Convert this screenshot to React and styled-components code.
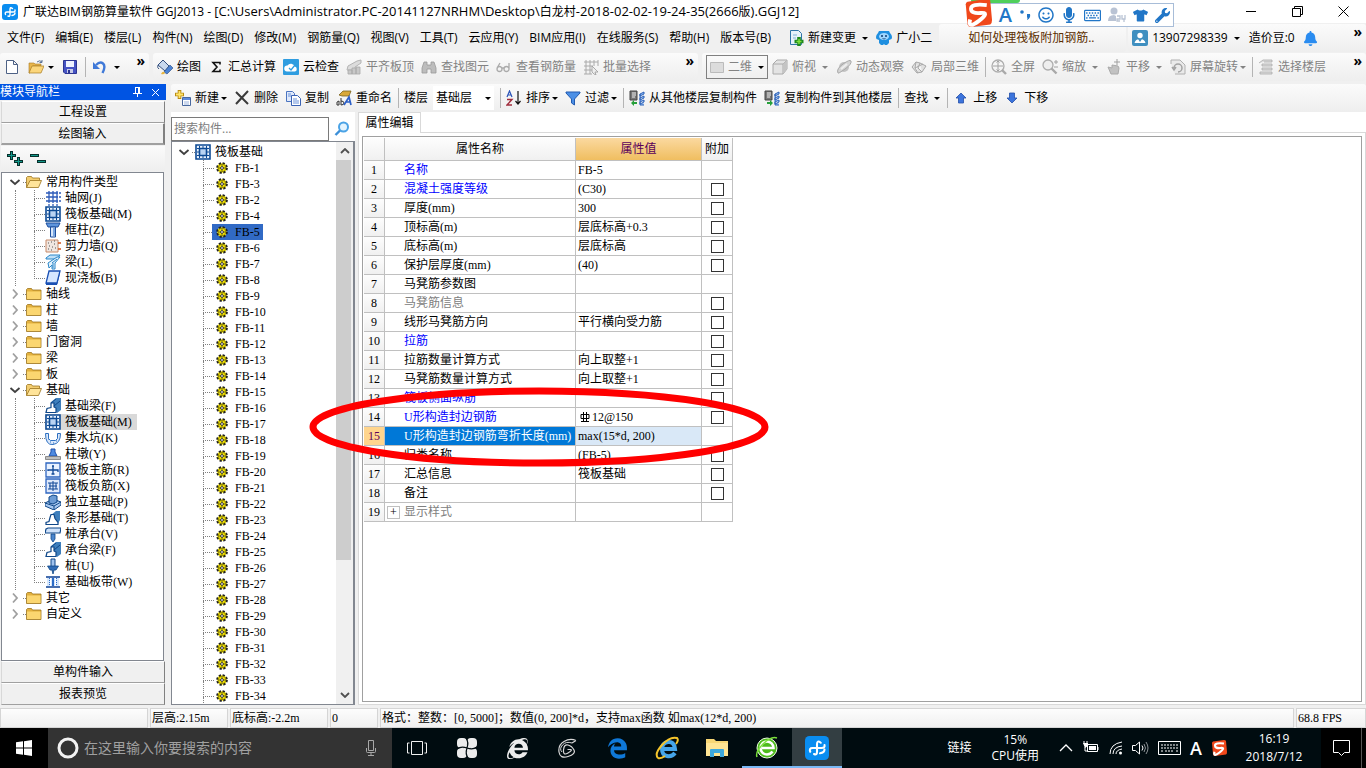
import React, { useState } from 'react';
import styled, { createGlobalStyle, css } from 'styled-components';
import {
  FaBell,
  FaInternetExplorer,
  FaMicrophone,
  FaRegKeyboard,
  FaRegSmile,
  FaTshirt,
  FaWrench,
} from 'react-icons/fa';
import { FaEdgeLegacy } from 'react-icons/fa6';

const font = {
  ui: `'Open Sans', 'Noto Sans CJK SC', sans-serif`,
  song: `'Liberation Serif', 'Noto Sans CJK SC', serif`,
};

const color = {
  face: '#f0f0f0',
  line: '#c0c0c0',
  frame: '#828790',
  disabled: '#838383',
  blue: '#0000ff',
  title: '#0054e3',
  select: '#316ac5',
  accent: '#0078d7',
};

// data
const menus = [
  '文件(F)', '编辑(E)', '楼层(L)', '构件(N)', '绘图(D)', '修改(M)', '钢筋量(Q)',
  '视图(V)', '工具(T)', '云应用(Y)', 'BIM应用(I)', '在线服务(S)', '帮助(H)', '版本号(B)',
];

const drawTools = [
  { icon: 'paint', label: '绘图' },
  { icon: 'sigma', label: '汇总计算' },
  { icon: 'cloud', label: '云检查' },
  { icon: 'align', label: '平齐板顶', disabled: true },
  { icon: 'binoculars', label: '查找图元', disabled: true },
  { icon: 'glasses', label: '查看钢筋量', disabled: true },
  { icon: 'batch', label: '批量选择', disabled: true },
];

const viewTools = [
  { icon: 'cube', label: '俯视', arrow: 'wide' },
  { icon: 'orbit', label: '动态观察' },
  { icon: 'local3d', label: '局部三维', divider: true },
  { icon: 'fit', label: '全屏' },
  { icon: 'zoom', label: '缩放', arrow: 'wide' },
  { icon: 'pan', label: '平移', arrow: 'wide' },
  { icon: 'rotate', label: '屏幕旋转', arrow: 'tight', divider: true },
  { icon: 'floors', label: '选择楼层' },
];

const moduleTree = [
  {
    label: '常用构件类型',
    children: [
      ['grid', '轴网(J)'],
      ['raft', '筏板基础(M)'],
      ['column', '框柱(Z)'],
      ['wall', '剪力墙(Q)'],
      ['beam', '梁(L)'],
      ['slab', '现浇板(B)'],
    ],
  },
  { label: '轴线' },
  { label: '柱' },
  { label: '墙' },
  { label: '门窗洞' },
  { label: '梁' },
  { label: '板' },
  {
    label: '基础',
    children: [
      ['footBeam', '基础梁(F)'],
      ['raft', '筏板基础(M)', true],
      ['pit', '集水坑(K)'],
      ['pier', '柱墩(Y)'],
      ['mainBar', '筏板主筋(R)'],
      ['negBar', '筏板负筋(X)'],
      ['isolated', '独立基础(P)'],
      ['strip', '条形基础(T)'],
      ['cap', '桩承台(V)'],
      ['footBeam', '承台梁(F)'],
      ['pile', '桩(U)'],
      ['band', '基础板带(W)'],
    ],
  },
  { label: '其它' },
  { label: '自定义' },
];

const components = [
  1, 3, 2, 4, 5, 6, 7, 8, 9, 10, 11, 12, 13, 14, 15, 16, 17, 18, 19, 20, 21, 22,
  23, 24, 25, 26, 27, 28, 29, 30, 31, 32, 33, 34,
].map((n) => `FB-${n}`);

const properties = [
  { name: '名称', value: 'FB-5', tone: 'blue', extra: false },
  { name: '混凝土强度等级', value: '(C30)', tone: 'blue' },
  { name: '厚度(mm)', value: '300' },
  { name: '顶标高(m)', value: '层底标高+0.3' },
  { name: '底标高(m)', value: '层底标高' },
  { name: '保护层厚度(mm)', value: '(40)' },
  { name: '马凳筋参数图', value: '', extra: false },
  { name: '马凳筋信息', value: '', tone: 'gray' },
  { name: '线形马凳筋方向', value: '平行横向受力筋' },
  { name: '拉筋', value: '', tone: 'blue' },
  { name: '拉筋数量计算方式', value: '向上取整+1' },
  { name: '马凳筋数量计算方式', value: '向上取整+1' },
  { name: '筏板侧面纵筋', value: '', tone: 'blue' },
  { name: 'U形构造封边钢筋', value: '12@150', tone: 'blue', rebar: true },
  { name: 'U形构造封边钢筋弯折长度(mm)', value: 'max(15*d, 200)', extra: false, active: true },
  { name: '归类名称', value: '(FB-5)' },
  { name: '汇总信息', value: '筏板基础' },
  { name: '备注', value: '' },
  { name: '显示样式', value: '', tone: 'gray', extra: false, expandable: true },
];

// icons, all drawn on a 16 x 16 grid
const glyphs = {
  app: (
    <>
      <rect width="16" height="16" rx="3" fill="#0a8df0" />
      <path
        d="M10.500 4.500Q8 2.500 8 5.500v5q0 2.500-2 1.500M3.500 10.500Q2.500 8 5 8h6q2.500 0 2-2M10 11.500q3-.5 3-2.500"
        fill="none"
        stroke="#fff"
        strokeWidth="1.400"
        strokeLinecap="round"
      />
    </>
  ),
  newDoc: <path d="M2.500 1.500h7l4 4v9h-11zM9.500 1.500v4h4" fill="#fff" stroke="#4d6185" />,
  open: (
    <>
      <path d="M1 4h5l1 1h6v2H5l-3 7H1z" fill="#e8b64c" stroke="#a87b22" strokeWidth=".6" />
      <path d="M4 7h12l-3 7H1z" fill="#fbd67c" stroke="#a87b22" strokeWidth=".7" />
      <path d="M9 3q3-2.500 5 0m0-2v2.500h-2.500" fill="none" stroke="#5b7396" />
    </>
  ),
  save: (
    <>
      <path d="M1.500 1.500h13v13H3l-1.500-1.500z" fill="#4553c4" stroke="#2c3591" />
      <path d="M4 2h8v6H4z" fill="#eef2ff" />
      <path d="M5 10h6v4H5z" fill="#c8cbe8" />
      <path d="M6 11h2v3H6z" fill="#2c3591" />
    </>
  ),
  undo: (
    <>
      <path d="M4 6q4-4 7-1.500T10.500 14" fill="none" stroke="#3f79d8" strokeWidth="2.400" />
      <path d="M1 3v7h7z" fill="#3f79d8" />
    </>
  ),
  paint: (
    <>
      <path d="M1 6l5-5 6 6-4 5z" fill="#c9d9ee" stroke="#35507f" />
      <path d="M1 6q-1 3 1 4" fill="none" stroke="#35507f" />
      <path d="M7 13l6-7 3 3-6 6z" fill="#4a82d4" stroke="#28497f" strokeWidth=".6" />
      <path d="M4 15q2-4 4-1-1 2-4 1" fill="#e9b63d" />
    </>
  ),
  sigma: <path d="M12 5.500V3.500H5L9 8l-4 4.500h7v-2" fill="none" stroke="#111" strokeWidth="1.600" />,
  cloud: (
    <>
      <rect width="16" height="16" rx="1" fill="#2f9de0" />
      <path d="M4 12.500a3 3 0 0 1 .5-6 4 4 0 0 1 7.200 1A2.600 2.600 0 0 1 12 12.500z" fill="#fff" />
      <path d="M6 9l2 2 4-5" fill="none" stroke="#2f9de0" strokeWidth="1.300" />
    </>
  ),
  align: (
    <>
      <path d="M1 11l1-4 9-5 4-1v3l-6 4v3z" fill="#dcdcdc" stroke="#b4b4b4" />
      <path d="M2 11h4v4H2zM6 9h4v6H6zM10 8h4v7h-4z" fill="#c8c8c8" stroke="#a8a8a8" strokeWidth=".8" />
    </>
  ),
  binoculars: <path d="M3 3h3v3h4V3h3l2 6v5h-5v-4H6v4H1V9z" fill="#bdbdbd" stroke="#9a9a9a" strokeWidth=".8" />,
  glasses: <path d="M6 10a2.500 2.500 0 1 1-5 0 2.500 2.500 0 0 1 5 0zm7 0a2.500 2.500 0 1 1-5 0 2.500 2.500 0 0 1 5 0zM1 9l3-5m9 6V4M6 9h2" fill="none" stroke="#ababab" strokeWidth="1.300" />,
  batch: (
    <>
      <path d="M1 3h14M1 7h9M1 11h8M1 15h8M3 1v14M7 1v14M11 1v6M15 1v6" stroke="#aaa" fill="none" />
      <path d="M9 7l6 6h-3l1 3-2-1-2-2z" fill="#eee" stroke="#999" strokeWidth=".8" />
    </>
  ),
  cube: (
    <>
      <path d="M1 5l4-4h10v9l-4 5H1z" fill="#e3e3e3" stroke="#aaa" />
      <path d="M1 5h10v10M11 5l4-4" fill="none" stroke="#aaa" />
      <path d="M11 5l4-4v9l-4 5z" fill="#c4c4c4" />
    </>
  ),
  orbit: (
    <>
      <circle cx="8" cy="8" r="5" fill="#c2c2c2" />
      <path d="M2 14Q0 10 7 5t8-3Q16 5 9 10t-7 4z" fill="#d4d4d4" stroke="#a8a8a8" />
      <path d="M5 10l6-5" stroke="#eee" strokeWidth="2" />
    </>
  ),
  local3d: <path d="M1 8l4-5 4 1 6 3-4 6-5 1zM5 3l-1 6 3 5M9 4l-2 5 4 4M4 9l8-4" fill="#e0e0e0" stroke="#a8a8a8" />,
  fit: (
    <>
      <circle cx="7" cy="7" r="6" fill="none" stroke="#adadad" strokeWidth="1.300" />
      <path d="M7 2v10M2 7h10M5.500 3.500L7 2l1.500 1.500M5.500 10.500L7 12l1.500-1.500" fill="none" stroke="#a2a2a2" />
      <path d="M11 11l4 4" stroke="#a9a9a9" strokeWidth="2.400" />
    </>
  ),
  zoom: (
    <>
      <circle cx="6" cy="6" r="5" fill="#eee" stroke="#adadad" strokeWidth="1.300" />
      <path d="M9.500 9.500l5 5" stroke="#a9a9a9" strokeWidth="2.400" />
      <path d="M12 3h4M14 1v4M12 8h4" stroke="#a2a2a2" />
    </>
  ),
  pan: (
    <>
      <path d="M2 8l4 1V6l6 1 1 2-1 6H5z" fill="#c2c2c2" stroke="#aaa" />
      <path d="M11 0v6M8 3h6" stroke="#a0a0a0" />
    </>
  ),
  rotate: (
    <>
      <path d="M1 5V1h9l5 5v9H5" fill="#eaeaea" stroke="#b0b0b0" />
      <path d="M4 9a4 4 0 1 1 4 4M2 8l2 3 2-3" fill="none" stroke="#a3a3a3" strokeWidth="1.500" />
    </>
  ),
  floors: <path d="M1 4l4-3h9v2H6M4 5h10v2H4zM4 9h10v2H4zM2 13h12v2H2z" fill="#ddd" stroke="#aaa" strokeWidth=".8" />,
  create: (
    <>
      <path d="M4.500 0v9M0 4.500h9" stroke="#b98b12" strokeWidth="3.600" />
      <path d="M4.500 1v7M1 4.500h7" stroke="#ffe46b" strokeWidth="1.800" />
      <path d="M7.500 7.500h8v8h-8z" fill="#fff" stroke="#48689f" />
      <path d="M8 8h7v2H8z" fill="#5d8ade" />
      <path d="M9 12h5M9 14h5" stroke="#9ab2dc" />
    </>
  ),
  remove: <path d="M2 2l12 12M14 1L2 14" stroke="#3a3a3a" strokeWidth="2" fill="none" />,
  copy: (
    <>
      <path d="M1.500 1.500h6l2 2v8h-8z" fill="#dfe9fb" stroke="#4b74c0" />
      <path d="M6.500 5.500h6l3 3v7h-9z" fill="#fff" stroke="#3a62b4" />
      <path d="M8 9h4M8 11h6M8 13h6M3 4h3M3 6h3" stroke="#6b92da" />
    </>
  ),
  rename: (
    <>
      <path d="M3 5l4-4h8l-2 5H6z" fill="#d8a83a" stroke="#7a6220" strokeWidth=".8" />
      <path d="M1 15q-1-4 2-4v4zM5 8v7q3 0 3-2t-3-2" fill="none" stroke="#333" />
      <path d="M8 15l5-8 2 8M10 12h4" fill="none" stroke="#2d60c8" strokeWidth="1.700" />
    </>
  ),
  sort: (
    <>
      <path d="M1 7l2.500-6L6 7M2 5h3" fill="none" stroke="#2b54b8" strokeWidth="1.200" />
      <path d="M1 9.500h5L1 15h5" fill="none" stroke="#a02c3c" strokeWidth="1.400" />
      <path d="M12 1v13M9.500 11l2.500 3 2.500-3" fill="none" stroke="#111" strokeWidth="1.200" />
    </>
  ),
  filter: <path d="M1 2h14v1L9.500 9v6L6.500 13V9L1 3z" fill="#4b8fe6" stroke="#235bb0" />,
  copyFrom: (
    <>
      <path d="M1 1h7v9H1z" fill="#777" stroke="#444" />
      <path d="M3 3h4M3 5h4M3 7h3" stroke="#eee" />
      <path d="M11 4l4-2v2l-4 2zM11 8l4-2v2l-4 2zM11 12l4-2v2l-4 2zM11 4v11h4" fill="#8fb8f0" stroke="#2d62b8" />
      <path d="M2 13l3-3v2h3v2H5v2z" fill="#26a03a" />
    </>
  ),
  copyTo: (
    <>
      <path d="M1 1h7v9H1z" fill="#777" stroke="#444" />
      <path d="M3 3h4M3 5h4M3 7h3" stroke="#eee" />
      <path d="M11 4l4-2v2l-4 2zM11 8l4-2v2l-4 2zM11 12l4-2v2l-4 2zM11 4v11h4" fill="#8fb8f0" stroke="#2d62b8" />
      <path d="M9 13l-3-3v2H3v2h3v2z" fill="#26a03a" />
    </>
  ),
  up: <path d="M8 3l5 5h-2.500v5h-5V8H3z" fill="#3c74dc" stroke="#234fa8" strokeWidth=".8" />,
  down: <path d="M8 13L3 8h2.500V3h5v5H13z" fill="#3c74dc" stroke="#234fa8" strokeWidth=".8" />,
  change: (
    <>
      <path d="M2.500.5h8l3 3v11h-11z" fill="#e6f2fb" stroke="#2f75a8" />
      <path d="M5 5h4M5 8h3" stroke="#7fb2d8" />
      <path d="M11 7v9M6.500 11.500h9" stroke="#1f8a1f" strokeWidth="3.600" />
      <path d="M11 9v5M8.500 11.500h5" stroke="#7fe03c" strokeWidth="1.500" />
    </>
  ),
  robot: (
    <>
      <path d="M3 1h10l1 2q3 3 1.500 6L13 10v3l-2 2H9l-1-1-1 1H5l-2-2v-3L.5 9Q-1 6 2 3z" fill="#1f8fe0" />
      <ellipse cx="8" cy="6.500" rx="5" ry="3.500" fill="#9fd6ff" />
      <circle cx="6" cy="6" r="1" fill="#0d3d72" />
      <circle cx="10" cy="6" r="1" fill="#0d3d72" />
      <path d="M6.500 8.500q1.500 1 3 0" fill="none" stroke="#0d3d72" strokeWidth=".8" />
    </>
  ),
  user: (
    <>
      <rect width="16" height="16" rx="2" fill="#3f8fc0" />
      <circle cx="8" cy="5.500" r="2.700" fill="#fff" />
      <path d="M2.500 13q1-4 5.500-4t5.500 4z" fill="#fff" />
      <path d="M6 9l2 3 2-3" fill="#3f8fc0" />
    </>
  ),
  folderOpen: (
    <>
      <path d="M.5 13.500v-10l1-1h4l1 1.500h7v2.500" fill="#f3cd70" stroke="#9c7520" strokeWidth=".8" />
      <path d="M4 6.500h11.500l-3 7H.5z" fill="#ffe49a" stroke="#9c7520" strokeWidth=".8" />
    </>
  ),
  folder: (
    <>
      <path d="M.5 13.500v-10l1-1h4l1 1.500h8.500v9.500z" fill="#e3b13f" stroke="#9c7520" strokeWidth=".8" />
      <path d="M1 5.500h13.500v7.500H1z" fill="#fbd670" />
    </>
  ),
  grid: <path d="M1 3h12M1 7h12M1 11h12M4 1v12M8 1v12M12 1v12M14 3h2M14 7h2M14 11h2M4 14v2M8 14v2M12 14v2" stroke="#2d5bb9" strokeWidth="1.300" fill="none" />,
  raft: (
    <>
      <path d="M1 1h14v14H1z" fill="#e8f1fc" stroke="#0d4a94" strokeWidth="1.600" />
      <path d="M4.500 4.500h7v7h-7z" fill="#b9d3f2" stroke="#0d4a94" strokeWidth="1.600" />
      <path d="M4.500 2v2M8 2v2M11.500 2v2M4.500 12v2M8 12v2M11.500 12v2M2 4.500h2M2 8h2M2 11.500h2M12 4.500h2M12 8h2M12 11.500h2" stroke="#0d4a94" />
    </>
  ),
  column: (
    <>
      <path d="M1 1h14l-2 4H3z" fill="#5e95dc" stroke="#1d4f9e" />
      <path d="M5.500 5h5v10h-5z" fill="#d9e8fb" stroke="#1d4f9e" />
      <path d="M9 6v8" stroke="#7ba7e0" strokeWidth="2" />
    </>
  ),
  wall: (
    <>
      <path d="M1 2h12v12H1z" fill="#f0e6e0" stroke="#c78a68" />
      <path d="M3 5h1M6 4h1M9 6h1M4 8h1M7 9h1M10 10h1M3 11h1M6 12h1M9 3h1" stroke="#555" />
      <path d="M13 5h3M13 11h3" stroke="#d2551e" strokeWidth="1.500" />
    </>
  ),
  beam: (
    <>
      <path d="M1 4l4-3h10l-3 4H1z" fill="#bfe0f8" stroke="#2a86c8" />
      <path d="M3 9l9-6h3l-5 6v6H7v-4l-3 3z" fill="#e3f2fd" stroke="#2a86c8" />
      <path d="M7 9l5-4M8 14V9" stroke="#2a86c8" />
    </>
  ),
  slab: (
    <>
      <path d="M4 1h11l-3 12H1z" fill="#d5e6ff" stroke="#1a50b4" strokeWidth="1.300" />
      <path d="M1 13h11l3-12v2l-3 12H1z" fill="#1a50b4" />
    </>
  ),
  footBeam: (
    <>
      <path d="M6 4l5-4h5v12l-4 3z" fill="#3f7fbc" />
      <path d="M1 14.500l1-4 4-1V5h3v4l2 1v4.500z" fill="#fff" stroke="#0f4788" strokeWidth="1.200" />
      <path d="M6 5l5-4M9 8l6-5" stroke="#0f4788" />
    </>
  ),
  pit: (
    <>
      <path d="M.5 3.500h3v5l2 2h5l2-2v-5h3q0 10-7.500 11T.5 3.500z" fill="#dbe9fb" stroke="#2d6fc1" />
      <path d="M5 12h1M8 13h1M11 11h1M3 9h1" stroke="#2d6fc1" />
    </>
  ),
  pier: (
    <>
      <path d="M6 3h4v3l2 4H4l2-4z" fill="#4e8ae0" stroke="#1f4fa8" />
      <path d="M.5 10.500h15v3H.5z" fill="#bfbfbf" stroke="#777" strokeWidth=".8" />
    </>
  ),
  mainBar: (
    <>
      <path d="M1 1h14v14H1z" fill="#e8f1ff" stroke="#2e66c0" strokeWidth="1.300" />
      <path d="M7 4h2M8 4v8M6.500 12h3M3 9V8h10v2" fill="none" stroke="#0e4796" strokeWidth="1.300" />
    </>
  ),
  negBar: (
    <>
      <path d="M1 1h14v14H1z" fill="#dfe9fb" stroke="#2e66c0" strokeWidth="1.300" />
      <path d="M8 3v10M3 5h10M4 8h8M3 11h10M5 5v6M11 5v6" fill="none" stroke="#0e4796" />
    </>
  ),
  isolated: (
    <>
      <path d="M0 9l8-4 8 3v3l-7 5-9-4z" fill="#a9c9f0" stroke="#0f4788" />
      <path d="M4 3l4-2 4 1v6l-4 2-4-1z" fill="#6d9cd4" stroke="#0f4788" />
      <path d="M0 9l9 3 7-4M9 12v4" fill="none" stroke="#0f4788" />
    </>
  ),
  strip: (
    <>
      <path d="M6 5l5-4h4v9l-3 5z" fill="#3f7fbc" />
      <path d="M1 14.500v-2l3-1 1-4 1-3h3l1 4 3 4v2z" fill="#fff" stroke="#0f4788" strokeWidth="1.200" />
    </>
  ),
  cap: (
    <>
      <path d="M1 3l2-1h13l-1 5H0z" fill="#cfe2fa" stroke="#0f4788" strokeWidth="1.200" />
      <path d="M6 8h4v5l-2 3-2-3z" fill="#4b86ce" stroke="#0f4788" strokeWidth=".8" />
    </>
  ),
  pile: (
    <>
      <path d="M6 1h4v8H6z" fill="#9fc2ee" stroke="#0f4788" />
      <path d="M2.500 8h11L11 12H9l-1 4-1-4H5z" fill="#2f6cb6" stroke="#0f4788" strokeWidth=".8" />
    </>
  ),
  band: (
    <>
      <path d="M1 3h14M1 13h14" stroke="#0b3f94" strokeWidth="1.500" />
      <path d="M2 4h3v8H2zM6 4h4v8H6zM11 4h3v8h-3z" fill="#d6e7fc" />
      <path d="M4.500 4v8M11.500 4v8" stroke="#2b6cc8" strokeDasharray="1 1" />
      <path d="M8 4v8" stroke="#2b6cc8" strokeWidth="2" />
    </>
  ),
  gear: (
    <>
      <circle cx="8" cy="8" r="5.500" fill="#ffee00" />
      <circle cx="8" cy="8" r="5.600" fill="none" stroke="#222" strokeWidth="2.200" strokeDasharray="2.600 1.800" />
      <circle cx="8" cy="8" r="4.200" fill="none" stroke="#6d6500" strokeWidth=".6" />
      <path d="M8 4v8M4 8h8" stroke="#222" strokeWidth=".8" />
      <circle cx="8" cy="8" r="1.600" fill="#fff" stroke="#222" />
    </>
  ),
  search: (
    <>
      <circle cx="9.500" cy="6" r="4.500" fill="#e3f4ff" stroke="#4aa3e6" strokeWidth="2" />
      <path d="M6 9.500L1.500 14" stroke="#3c8fd8" strokeWidth="2.400" />
    </>
  ),
  expandAll: (
    <>
      <path d="M4.500 0v9M0 4.500h9M11.500 6v9M7 10.500h9" stroke="#062f2b" strokeWidth="3" />
      <path d="M4.500 1v7M1 4.500h7M11.500 7v7M8 10.500h7" stroke="#12988a" />
    </>
  ),
  collapseAll: (
    <>
      <path d="M0 4.500h9M7 10.500h9" stroke="#062f2b" strokeWidth="3" />
      <path d="M1 4.500h7M8 10.500h7" stroke="#12988a" />
    </>
  ),
  sogou: (
    <>
      <path d="M1 3q0-1 1-1.500L13 0q1.500 0 2 1l1 11q0 2-1 2.500L4 16q-1.500 0-2-1.500z" fill="#f0481b" />
      <path d="M13 3.500Q4 2.500 4 5.500T9.500 8t-1 4.500-5-.8" fill="none" stroke="#fff" strokeWidth="2.200" />
    </>
  ),
};

const Icon = ({ name, size = 16 }) => (
  <Svg width={size} height={size} viewBox="0 0 16 16" aria-hidden="true">
    {glyphs[name]}
  </Svg>
);

const Chevron = ({ open }) => (
  <Svg width="12" height="12" viewBox="0 0 12 12" aria-hidden="true">
    <path
      d={open ? 'M1.500 4L6 8l4.500-4' : 'M4 1.500L8 6l-4 4.500'}
      fill="none"
      stroke={open ? '#404040' : '#a0a0a0'}
      strokeWidth="1.800"
    />
  </Svg>
);

const Tool = ({ icon, label, disabled, arrow, divider }) => (
  <>
    <ToolButton type="button" disabled={disabled}>
      {icon && <Icon name={icon} />}
      {label}
      {arrow && <Arrow $wide={arrow === 'wide'} $tight={arrow === 'tight'} />}
    </ToolButton>
    {divider && <Divider />}
  </>
);

const ModuleNav = () => (
  <Nav>
    <NavTitle>
      模块导航栏
      <NavActions>
        <NavAction type="button" aria-label="固定">
          <Svg width="9" height="10" viewBox="0 0 9 10">
            <path d="M2 0.500h5M2.500 0v6M6.500 0v6M5.500 0v6M0 6.500h9M4.500 6v4" stroke="#fff" fill="none" />
          </Svg>
        </NavAction>
        <NavAction type="button" aria-label="关闭">
          <Svg width="9" height="9" viewBox="0 0 9 9">
            <path d="M1 1l7 7M8 1L1 8" stroke="#fff" />
          </Svg>
        </NavAction>
      </NavActions>
    </NavTitle>
    <NavTab type="button">工程设置</NavTab>
    <NavTab type="button" $active>绘图输入</NavTab>
    <NavTools>
      <IconButton type="button" aria-label="全部展开"><Icon name="expandAll" /></IconButton>
      <IconButton type="button" aria-label="全部折叠"><Icon name="collapseAll" /></IconButton>
    </NavTools>
    <NavTree>
      {moduleTree.map(({ label, children }) => (
        <li key={label}>
          <GroupRow>
            <Chevron open={!!children} />
            <Stub />
            <TreeLabel type="button">
              <Icon name={children ? 'folderOpen' : 'folder'} />
              {label}
            </TreeLabel>
          </GroupRow>
          {children && (
            <Branches $line>
              {children.map(([icon, text, selected], i) => (
                <TreeRow key={text}>
                  <Branch $last={i === children.length - 1} />
                  <TreeLabel type="button" $gray={selected}>
                    <Icon name={icon} />
                    {text}
                  </TreeLabel>
                </TreeRow>
              ))}
            </Branches>
          )}
        </li>
      ))}
    </NavTree>
    <NavTab type="button">单构件输入</NavTab>
    <NavTab type="button">报表预览</NavTab>
  </Nav>
);

const ComponentList = () => {
  const [selected, setSelected] = useState('FB-5');

  return (
    <ListPane>
      <SearchRow>
        <SearchInput type="text" placeholder="搜索构件..." aria-label="搜索构件" />
        <IconButton type="button" aria-label="搜索"><Icon name="search" /></IconButton>
      </SearchRow>
      <ListBox>
        <ListTree>
          <GroupRow>
            <Chevron open />
            <Stub />
            <TreeLabel type="button">
              <Icon name="raft" />
              筏板基础
            </TreeLabel>
          </GroupRow>
          <Branches>
            {components.map((name) => (
              <TreeRow key={name}>
                <Branch />
                <ComponentLabel
                  type="button"
                  $selected={name === selected}
                  onClick={() => setSelected(name)}
                >
                  <Icon name="gear" size={14} />
                  {name}
                </ComponentLabel>
              </TreeRow>
            ))}
          </Branches>
        </ListTree>
        <ScrollBar>
          <ScrollArrow>
            <Svg width="10" height="6" viewBox="0 0 10 6"><path d="M1 5l4-4 4 4" fill="none" stroke="#505050" strokeWidth="1.800" /></Svg>
          </ScrollArrow>
          <ScrollTrack><ScrollThumb /></ScrollTrack>
          <ScrollArrow>
            <Svg width="10" height="6" viewBox="0 0 10 6"><path d="M1 1l4 4 4-4" fill="none" stroke="#505050" strokeWidth="1.800" /></Svg>
          </ScrollArrow>
        </ScrollBar>
      </ListBox>
    </ListPane>
  );
};

const PropertyEditor = () => (
  <Editor>
    <Tabs>
      <Tab type="button">属性编辑</Tab>
      <TabLine />
    </Tabs>
    <Sheet>
      <SheetFrame>
        <TableHolder>
          <Table>
            <colgroup>
              <col width="21" />
              <col width="191" />
              <col width="126" />
              <col width="31" />
            </colgroup>
            <thead>
              <tr>
                <HeadCell />
                <HeadCell>属性名称</HeadCell>
                <HeadCell $current>属性值</HeadCell>
                <HeadCell>附加</HeadCell>
              </tr>
            </thead>
            <tbody>
              {properties.map(({ name, value, tone, extra = true, active, expandable, rebar }, i) => (
                <tr key={name}>
                  <NumberCell $active={active}>{i + 1}</NumberCell>
                  <NameCell $tone={tone} $active={active}>
                    <NameInner>
                      <ToggleSlot>
                        {expandable && <Toggle type="button" aria-label="展开">+</Toggle>}
                      </ToggleSlot>
                      {name}
                    </NameInner>
                  </NameCell>
                  <ValueCell $active={active}>
                    {rebar && (
                      <RebarMark width="10" height="10" viewBox="0 0 10 10" aria-label="三级钢">
                        <path d="M1 2.500v4h8v-4zM3.500 0v9M6.500 0v9M1 9.500h8" fill="none" stroke="#000" />
                      </RebarMark>
                    )}
                    {value}
                  </ValueCell>
                  <ExtraCell>
                    {extra && <Check type="checkbox" aria-label={`附加 ${name}`} />}
                  </ExtraCell>
                </tr>
              ))}
            </tbody>
          </Table>
          <Marker viewBox="0 0 460 80" aria-hidden="true">
            <ellipse cx="230" cy="40" rx="226" ry="36" />
          </Marker>
        </TableHolder>
      </SheetFrame>
    </Sheet>
  </Editor>
);

const InputMethod = () => (
  <>
    <SpeedBall />
    <Ime>
      <ImeLogo><Icon name="sogou" size={28} /></ImeLogo>
      <ImeLetter>A</ImeLetter>
      <Svg width="12" height="12" viewBox="0 0 12 12">
        <circle cx="3" cy="3" r="1.800" fill="#2176c7" />
        <path d="M8 5h3q1 4-3 6 1-2 0-3z" fill="#2176c7" />
      </Svg>
      <FaRegSmile size={16} />
      <FaMicrophone size={16} />
      <FaRegKeyboard size={17} />
      <Svg width="18" height="16" viewBox="0 0 18 16">
        <circle cx="6" cy="4" r="3.500" fill="#b9c3d4" />
        <path d="M0 14q0-6 6-6l2 1v5z" fill="#b9c3d4" />
        <path d="M9 9h3v3H9v2h3M14 8v4h3V8M16 12v3" fill="none" stroke="#b9c3d4" strokeWidth="1.300" />
      </Svg>
      <FaTshirt size={15} />
      <FaWrench size={15} />
    </Ime>
  </>
);

const TaskBar = () => (
  <Task>
    <Start type="button" aria-label="开始">
      <Svg width="16" height="16" viewBox="0 0 16 16">
        <path d="M0 2.300l7-1v6.200H0zM8 1.200L16 0v7.500H8zM0 8.500h7v6.200l-7-1zM8 8.500h8V16l-8-1.200z" fill="#fff" />
      </Svg>
    </Start>
    <Cortana>
      <Svg width="22" height="22" viewBox="0 0 22 22">
        <circle cx="11" cy="11" r="9" fill="none" stroke="#f2f2f2" strokeWidth="3" />
      </Svg>
      <CortanaInput type="text" placeholder="在这里输入你要搜索的内容" aria-label="搜索" />
      <Svg width="12" height="18" viewBox="0 0 12 18">
        <path d="M3.500 1.500h5v10h-5zM1.500 9v3.500q0 1 1 1h7q1 0 1-1V9M6 14v3M3 16.500h6" fill="none" stroke="#a8a8a8" />
      </Svg>
    </Cortana>
    <TaskApps>
      <TaskButton type="button" aria-label="任务视图">
        <Svg width="20" height="14" viewBox="0 0 20 14">
          <path d="M4.500.5h11v13h-11zM2.500 2H.5v10h2M17.500 2h2v10h-2" fill="none" stroke="#f0f0f0" />
        </Svg>
      </TaskButton>
      <TaskButton type="button" aria-label="四叶草">
        <Svg width="22" height="22" viewBox="0 0 22 22">
          <rect x="1" y="1" width="10" height="10" rx="4" fill="#ececec" />
          <rect x="11" y="1" width="10" height="10" rx="4" fill="#ececec" />
          <rect x="1" y="11" width="10" height="10" rx="4" fill="#ececec" />
          <rect x="11" y="11" width="10" height="10" rx="4" fill="#ececec" />
          <path d="M8 8h6v6H8z" fill="#ececec" />
          <path d="M11 11q2-6-1-10M11 11q6 2 10-1M11 11q-2 6 1 10M11 11q-6-2-10 1" fill="none" stroke="#000c10" strokeWidth="1.200" />
        </Svg>
      </TaskButton>
      <TaskButton type="button" aria-label="浏览器" $tone="#ececec"><FaInternetExplorer size={21} /></TaskButton>
      <TaskButton type="button" aria-label="漩涡">
        <Svg width="20" height="20" viewBox="0 0 20 20">
          <path d="M19 2.500Q13 0 7 3.500T2 14t9 4.500 6-6.500-6-5-4.500 5 4.500 3 2.500-3.500h-3M19 2.500l-4 2.500" fill="none" stroke="#d8d8d8" strokeWidth="1.200" />
          <path d="M15 5Q9 3 5.500 7T5 14" fill="none" stroke="#d8d8d8" />
        </Svg>
      </TaskButton>
      <TaskButton type="button" aria-label="Edge" $tone="#0f78d8"><FaEdgeLegacy size={21} /></TaskButton>
      <TaskButton type="button" aria-label="Internet Explorer" $tone="#4ab2f0">
        <Svg width="24" height="24" viewBox="0 0 24 24">
          <path d="M20 17Q17 21 12 20t-5-7 6-7 7 7H8" fill="none" stroke="#45a5ea" strokeWidth="4" />
          <path d="M3 22Q-1 18 7 9T22 2q2 2-1 6M3 22q3 1 7-2" fill="none" stroke="#f5c52c" strokeWidth="2" />
        </Svg>
      </TaskButton>
      <TaskButton type="button" aria-label="文件资源管理器">
        <Svg width="22" height="20" viewBox="0 0 22 20">
          <path d="M0 1h8l2 2h12v15H0z" fill="#f8d775" />
          <path d="M0 5h22v13H0z" fill="#ffe594" />
          <path d="M4 19v-7q0-1 1-1h12q1 0 1 1v7h-4v-4H8v4z" fill="#3ea8dc" />
        </Svg>
      </TaskButton>
      <TaskButton type="button" aria-label="360浏览器" $running>
        <Svg width="24" height="24" viewBox="0 0 24 24">
          <circle cx="12" cy="12" r="10" fill="#4dbb1c" stroke="#e9f8df" />
          <path d="M17.500 15.500q-2 3-5.500 3a6.500 6.500 0 1 1 6.500-6.500H7" fill="none" stroke="#fff" strokeWidth="2.600" />
          <path d="M2 21Q0 16 8 8t14-6" fill="none" stroke="#7be03c" strokeWidth="1.500" />
        </Svg>
      </TaskButton>
      <TaskButton type="button" aria-label="广联达" $running $focus><Icon name="app" size={24} /></TaskButton>
    </TaskApps>
    <Tray>
      <span>链接</span>
      <TrayStack>
        <span>15%</span>
        <span>CPU使用</span>
      </TrayStack>
      <TrayIcons>
        <Svg width="14" height="10" viewBox="0 0 14 10"><path d="M1 8l6-6 6 6" fill="none" stroke="#fff" strokeWidth="1.300" /></Svg>
        <Svg width="18" height="14" viewBox="0 0 18 14">
          <path d="M5.500 3.500h10v7h-10zM16 6v3" fill="none" stroke="#fff" />
          <path d="M7 5h7v4H7zM1 2h5v3L3 7z" fill="#fff" />
          <path d="M2 0v3M5 0v3M3 6v4h3" stroke="#fff" fill="none" />
        </Svg>
        <Svg width="14" height="14" viewBox="0 0 14 14">
          <path d="M1 13Q1 3 13 1M4 13q0-7 9-8M7 13q0-4 6-5" fill="none" stroke="#fff" />
          <circle cx="11.500" cy="12" r="1.500" fill="#fff" />
        </Svg>
        <Svg width="17" height="14" viewBox="0 0 17 14">
          <path d="M.5 4.500h3l4-3.500v12l-4-3.500h-3zM10 4.500q2 2.500 0 5" fill="none" stroke="#fff" />
          <path d="M12 3q3 4 0 8M14 1q4 6 0 12" fill="none" stroke="#8b9194" />
        </Svg>
        <Svg width="23" height="14" viewBox="0 0 23 14">
          <path d="M.5.500h22v13H.5z" fill="none" stroke="#fff" />
          <path d="M3 4h17M3 7h17M3 10h2M7 10h9M18 10h2" stroke="#fff" strokeDasharray="2 1" />
        </Svg>
        <TrayLetter>A</TrayLetter>
        <Icon name="sogou" />
      </TrayIcons>
    </Tray>
    <Clock>
      <span>16:19</span>
      <span>2018/7/12</span>
    </Clock>
    <Notice type="button" aria-label="通知">
      <Svg width="17" height="17" viewBox="0 0 17 17">
        <path d="M.5.500h16v12h-5l-3 3-3-3h-5z" fill="none" stroke="#fff" />
      </Svg>
    </Notice>
    <ShowDesktop type="button" aria-label="显示桌面" />
  </Task>
);

const App = () => (
  <>
    <GlobalStyle />
    <Window>
      <TitleBar>
        <Icon name="app" />
        <TitleText>
          广联达BIM钢筋算量软件 GGJ2013 - <FilePath>[C:\Users\Administrator.PC-20141127NRHM\Desktop\</FilePath>
          白龙村<FilePath>-2018-02-02-19-24-35(2666</FilePath>版<FilePath>).GGJ12]</FilePath>
        </TitleText>
        <WindowButton type="button" aria-label="最小化">
          <Svg width="11" height="11" viewBox="0 0 11 11"><path d="M0 5.500h10" stroke="#000" /></Svg>
        </WindowButton>
        <WindowButton type="button" aria-label="还原">
          <Svg width="11" height="11" viewBox="0 0 11 11"><path d="M.5 2.500h8v8h-8zM2.500 2.500v-2h8v8h-2" fill="none" stroke="#000" /></Svg>
        </WindowButton>
        <WindowButton type="button" aria-label="关闭">
          <Svg width="11" height="11" viewBox="0 0 11 11"><path d="M.5.500l10 10M10.500.500l-10 10" stroke="#000" /></Svg>
        </WindowButton>
      </TitleBar>
      <InputMethod />

      <MenuBar>
        {menus.map((menu) => (
          <MenuItem type="button" key={menu}>{menu}</MenuItem>
        ))}
        <MenuExtras>
          <Tool icon="change" label="新建变更" arrow="wide" />
          <Tool icon="robot" label="广小二" />
        </MenuExtras>
        <Question href="#question">如何处理筏板附加钢筋..</Question>
        <Account>
          <Tool icon="user" label="13907298339" arrow="wide" />
          <span>造价豆:0</span>
          <FaBell size={15} color="#2a8cf0" />
          <Overflow>»</Overflow>
        </Account>
      </MenuBar>

      <ToolRow>
        <FileBar>
          <IconButton type="button" aria-label="新建"><Icon name="newDoc" /></IconButton>
          <ToolButton type="button" aria-label="打开"><Icon name="open" /><Arrow /></ToolButton>
          <IconButton type="button" aria-label="保存"><Icon name="save" /></IconButton>
          <Divider />
          <ToolButton type="button" aria-label="撤销"><Icon name="undo" /><Arrow $wide /></ToolButton>
          <Overflow>»</Overflow>
        </FileBar>
        <DrawBar>
          {drawTools.map((tool) => <Tool key={tool.label} {...tool} />)}
          <Overflow>»</Overflow>
        </DrawBar>
        <ViewBar>
          <ViewSelect>
            <Svg width="14" height="11" viewBox="0 0 14 11"><path d="M.5.500h13v10H.5z" fill="#dcdcdc" stroke="#bbb" /></Svg>
            <Select aria-label="视图" $gray defaultValue="二维">
              <option>二维</option>
              <option>三维</option>
            </Select>
            <Arrow />
          </ViewSelect>
          {viewTools.map((tool) => <Tool key={tool.label} disabled {...tool} />)}
          <Overflow>»</Overflow>
        </ViewBar>
      </ToolRow>

      <Body>
        <ModuleNav />
        <Work>
          <EditBar>
            <Tool icon="create" label="新建" arrow="tight" />
            <Tool icon="remove" label="删除" />
            <Tool icon="copy" label="复制" />
            <Tool icon="rename" label="重命名" divider />
            <FloorLabel htmlFor="floor">楼层</FloorLabel>
            <FloorSelect>
              <Select id="floor" defaultValue="基础层">
                <option>基础层</option>
                <option>首层</option>
              </Select>
              <Arrow />
            </FloorSelect>
            <Divider />
            <Tool icon="sort" label="排序" arrow="tight" />
            <Tool icon="filter" label="过滤" arrow="tight" divider />
            <Tool icon="copyFrom" label="从其他楼层复制构件" />
            <Tool icon="copyTo" label="复制构件到其他楼层" divider />
            <Tool label="查找" arrow="wide" divider />
            <Tool icon="up" label="上移" />
            <Tool icon="down" label="下移" />
          </EditBar>
          <Panes>
            <ComponentList />
            <PropertyEditor />
          </Panes>
        </Work>
      </Body>

      <StatusBar>
        <StatusCell $width={148} />
        <StatusCell $width={78}>层高:2.15m</StatusCell>
        <StatusCell $width={98}>底标高:-2.2m</StatusCell>
        <StatusCell $width={48}>0</StatusCell>
        <StatusCell $grow>格式：整数：[0, 5000]；数值(0, 200]*d，支持max函数 如max(12*d, 200)</StatusCell>
        <StatusCell $width={70}>68.8 FPS</StatusCell>
      </StatusBar>
      <TaskBar />
    </Window>
  </>
);

const GlobalStyle = createGlobalStyle`
  * {
    box-sizing: border-box;
  }

  body {
    margin: 0;
    background: ${color.face};
    color: #000;
    font-family: ${font.ui};
    font-size: 12px;
    line-height: 16px;
    overflow: hidden;
  }

  button, input, select {
    margin: 0;
    padding: 0;
    border: 0;
    background: none;
    color: inherit;
    font: inherit;
  }

  ul {
    margin: 0;
    padding: 0;
    list-style: none;
  }
`;

const Svg = styled.svg`
  display: block;
  flex: none;
`;

const barFace = css`
  background: linear-gradient(#fbfbfb, #eeeeee);
  border-radius: 3px;
`;

const Window = styled.div`
  position: relative;
  display: flex;
  flex-direction: column;
  height: 100vh;
`;

// title bar
const TitleBar = styled.header`
  display: flex;
  align-items: center;
  flex: none;
  height: 23px;
  padding-left: 2px;
  background: #fff;
`;

const TitleText = styled.span`
  flex: 1;
  margin-left: 5px;
  white-space: nowrap;
`;

const FilePath = styled.span`
  font-size: 13px;
`;

const WindowButton = styled.button`
  display: flex;
  align-items: center;
  justify-content: center;
  width: 46px;
  height: 20px;
`;

const Ime = styled.div`
  position: absolute;
  top: 3px;
  right: 192px;
  z-index: 2;
  display: flex;
  align-items: center;
  gap: 7px;
  height: 24px;
  padding-right: 3px;
  border: 1px solid #a8bdd8;
  background: #fff;
  color: #2176c7;
`;

const SpeedBall = styled.div`
  position: absolute;
  top: 0;
  right: 346px;
  z-index: 1;
  width: 49px;
  height: 3px;
  border-radius: 0 0 8px 8px;
  background: #4fcf5b;
`;

const ImeLogo = styled.span`
  margin: -4px 0 0 -11px;
`;

const ImeLetter = styled.span`
  font-size: 20px;
  font-weight: 600;
`;

// menu
const MenuBar = styled.nav`
  display: flex;
  align-items: center;
  flex: none;
  height: 30px;
  padding-left: 2px;
`;

const MenuItem = styled.button`
  padding: 0 6px 0 5px;
  white-space: nowrap;
`;

const MenuExtras = styled.div`
  display: flex;
  gap: 7px;
  padding: 0 7px 0 11px;
`;

const Question = styled.a`
  ${barFace}
  flex: none;
  width: 187px;
  padding: 6px 0 6px 29px;
  color: #5c2e00;
  text-decoration: none;
  white-space: nowrap;
`;

const Account = styled.div`
  ${barFace}
  display: flex;
  align-items: center;
  flex: 1;
  gap: 8px;
  height: 28px;
  margin-left: 2px;
  padding-left: 4px;
  white-space: nowrap;
`;

const Overflow = styled.span`
  align-self: flex-start;
  flex: none;
  margin: 0 4px 0 auto;
  font-size: 14px;
  font-weight: 700;
  line-height: 16px;
`;

// tool bars
const ToolRow = styled.div`
  display: flex;
  flex: none;
  gap: 4px;
  height: 28px;
  margin-bottom: 3px;
`;

const Bar = styled.div`
  ${barFace}
  display: flex;
  align-items: center;
  gap: 7px;
  padding-left: 4px;
`;

const FileBar = styled(Bar)`
  gap: 8px;
  width: 149px;
`;

const DrawBar = styled(Bar)`
  width: 545px;
`;

const ViewBar = styled(Bar)`
  flex: 1;
`;

const ToolButton = styled.button`
  display: flex;
  align-items: center;
  flex: none;
  gap: 4px;
  white-space: nowrap;

  &:disabled {
    color: ${color.disabled};
  }
`;

const IconButton = styled.button`
  flex: none;
`;

const arrowMargin = ({ $wide, $tight }) => {
  if ($wide) return '0 1px 0 2px';
  return $tight ? '0 0 0 -2px' : '0';
};

const Arrow = styled.span`
  flex: none;
  margin: ${arrowMargin};
  border: 3px solid transparent;
  border-top-color: currentColor;
  border-bottom: 0;
`;

const Divider = styled.span`
  flex: none;
  width: 1px;
  height: 20px;
  margin: 0 -2px 0 -1px;
  background: #b4b4b4;
`;

const Select = styled.select`
  flex: 1;
  min-width: 0;
  appearance: none;
  outline: none;
  color: ${({ $gray }) => ($gray ? color.disabled : '#000')};
`;

const ViewSelect = styled.label`
  display: flex;
  align-items: center;
  flex: none;
  gap: 4px;
  width: 62px;
  height: 24px;
  margin-right: -3px;
  padding: 0 3px;
  border: 1px solid #808080;
`;

const FloorLabel = styled.label`
  flex: none;
  margin-right: -2px;
`;

const FloorSelect = styled.span`
  display: flex;
  align-items: center;
  flex: none;
  width: 61px;
  height: 24px;
  padding: 0 3px;
  background: #fff;
`;

// main area
const Body = styled.main`
  display: flex;
  flex: 1;
  gap: 5px;
  min-height: 0;
`;

const Work = styled.div`
  display: flex;
  flex-direction: column;
  flex: 1;
  min-width: 0;
`;

const EditBar = styled(Bar)`
  flex: none;
  height: 28px;
`;

const Panes = styled.div`
  display: flex;
  flex: 1;
  gap: 3px;
  min-height: 0;
`;

const Nav = styled.aside`
  display: flex;
  flex-direction: column;
  flex: none;
  width: 166px;
  font-family: ${font.song};
`;

const NavTitle = styled.h2`
  display: flex;
  align-items: center;
  justify-content: space-between;
  flex: none;
  height: 16px;
  margin: 0 0 1px;
  padding-right: 6px;
  background: ${color.title};
  color: #fff;
  font-size: 12px;
  font-weight: 400;
`;

const NavActions = styled.span`
  display: flex;
  gap: 9px;
`;

const NavAction = styled.button`
  flex: none;
`;

const NavTab = styled.button`
  flex: none;
  height: 22px;
  margin: 0 1px;
  border: 1px solid #a0a0a0;
  border-color: #fff #808080 #a0a0a0 #d8d8d8;
  border-bottom-width: ${({ $active }) => ($active ? '2px' : '1px')};
  border-right-width: ${({ $active }) => ($active ? '2px' : '1px')};
  background: ${color.face};
`;

const NavTools = styled.div`
  display: flex;
  align-items: center;
  flex: none;
  gap: 7px;
  height: 25px;
  margin: 1px;
  padding-left: 6px;
  background: linear-gradient(#fbfbfb, #eeeeee);
`;

const NavTree = styled.ul`
  flex: 1;
  min-height: 0;
  margin: 0 2px 0 1px;
  padding-top: 1px;
  border: 1px solid ${color.frame};
  background: #fff;
  overflow: hidden;
`;

const GroupRow = styled.div`
  display: flex;
  align-items: center;
  height: 16px;
  padding-left: 7px;
`;

const Stub = styled.span`
  width: 3px;
  margin: 0 0 0 2px;
  border-top: 1px dotted #808080;
`;

const Branches = styled.ul`
  margin-left: 13px;
  padding-left: ${({ $line }) => ($line ? '18px' : '0')};
  border-left: ${({ $line }) => ($line ? '1px dotted #808080' : '0')};
`;

const TreeRow = styled.li`
  display: flex;
  height: 16px;
`;

const Branch = styled.span`
  flex: none;
  width: 11px;

  &::before,
  &::after {
    content: '';
    display: block;
    height: 8px;
    border-left: 1px dotted #808080;
  }

  &::before {
    border-bottom: 1px dotted #808080;
  }

  &::after {
    border-left-width: ${({ $last }) => ($last ? '0' : '1px')};
  }
`;

const TreeLabel = styled.button`
  display: flex;
  align-items: center;
  gap: 4px;
  height: 16px;
  padding-right: 5px;
  background: ${({ $gray }) => ($gray ? '#d9d9d9' : 'none')};
  white-space: nowrap;
`;

// component list
const ListPane = styled.section`
  display: flex;
  flex-direction: column;
  flex: none;
  width: 184px;
  padding-top: 5px;
  background: #fff;
  font-family: ${font.song};
`;

const SearchRow = styled.div`
  display: flex;
  align-items: center;
  flex: none;
  gap: 5px;
  height: 24px;
`;

const SearchInput = styled.input`
  width: 158px;
  height: 24px;
  padding: 0 0 2px 2px;
  border: 1px solid #7a7a7a;
  background: #fff;
  font-family: ${font.ui};

  &::placeholder {
    color: #808080;
  }
`;

const ListBox = styled.div`
  display: flex;
  flex: 1;
  min-height: 0;
  border: 1px solid ${color.frame};
  border-right-width: 2px;
`;

const ListTree = styled.div`
  flex: 1;
  padding-top: 2px;
  overflow: hidden;

  ${GroupRow} {
    padding-left: 6px;
  }

  ${Branches} {
    margin-left: 31px;
  }
`;

const ComponentLabel = styled(TreeLabel)`
  gap: 6px;
  margin-left: -2px;
  padding: 0 3px;
  background: ${({ $selected }) => ($selected ? color.select : 'none')};
`;

const ScrollBar = styled.div`
  display: flex;
  flex-direction: column;
  width: 17px;
  background: ${color.face};
`;

const ScrollArrow = styled.span`
  display: flex;
  align-items: center;
  justify-content: center;
  height: 18px;
`;

const ScrollTrack = styled.div`
  flex: 1;
  padding-right: 2px;
`;

const ScrollThumb = styled.div`
  height: 76%;
  background: #cdcdcd;
`;

// property editor
const Editor = styled.section`
  display: flex;
  flex-direction: column;
  flex: 1;
  min-width: 0;
  font-family: ${font.song};
`;

const Tabs = styled.div`
  display: flex;
  flex: none;
  height: 21px;
  background: #fff;
`;

const Tab = styled.button`
  width: 63px;
  border: 1px solid #d9d9d9;
  border-bottom: 0;
`;

const TabLine = styled.span`
  flex: 1;
  border-bottom: 1px solid #d9d9d9;
`;

const Sheet = styled.div`
  display: flex;
  flex: 1;
  min-height: 0;
  padding: 3px 3px 2px;
  border: 1px solid #d9d9d9;
  border-top: 0;
  background: #fff;
`;

const SheetFrame = styled.div`
  flex: 1;
  padding: 1px;
  border: 1px solid #a0a0a0;
`;

const TableHolder = styled.div`
  position: relative;
  width: 369px;
`;

const Table = styled.table`
  width: 369px;
  table-layout: fixed;
  border-collapse: separate;
  border-spacing: 0;
`;

const cell = css`
  height: 19px;
  padding: 0;
  border-right: 1px solid ${color.line};
  border-bottom: 1px solid ${color.line};
  line-height: 18px;
  white-space: nowrap;
`;

const HeadCell = styled.th`
  ${cell}
  height: 23px;
  background: ${({ $current }) =>
    $current ? 'linear-gradient(#fbd9a0, #f0be60)' : 'linear-gradient(#fdfdfd, #f0f0f0)'};
  color: ${({ $current }) => ($current ? '#5a005a' : '#000')};
  font-weight: 400;
`;

const NumberCell = styled.td`
  ${cell}
  background: ${({ $active }) => ($active ? '#ffd58d' : 'linear-gradient(#fdfdfd, #f0f0f0)')};
  color: ${({ $active }) => ($active ? '#5a005a' : '#000')};
  text-align: center;
`;

const NameCell = styled.td`
  ${cell}
  background: ${({ $active }) => ($active ? color.accent : '#fff')};
  color: ${({ $tone, $active }) => {
    if ($active) return '#fff';
    if ($tone === 'blue') return color.blue;
    return $tone === 'gray' ? '#808080' : '#000';
  }};
`;

const NameInner = styled.div`
  display: flex;
  align-items: center;
`;

const ToggleSlot = styled.span`
  flex: none;
  width: 19px;
  padding-left: 2px;
`;

const Toggle = styled.button`
  display: block;
  width: 13px;
  height: 13px;
  border: 1px solid ${color.line};
  color: #000;
  line-height: 10px;
`;

const ValueCell = styled.td`
  ${cell}
  padding-left: 2px;
  background: ${({ $active }) => ($active ? '#d9e8f7' : '#fff')};
`;

const RebarMark = styled.svg`
  margin: 0 2px;
  vertical-align: -1px;
`;

const ExtraCell = styled.td`
  ${cell}
  text-align: center;
`;

const Check = styled.input`
  display: block;
  width: 13px;
  height: 13px;
  margin: 0 auto;
  appearance: none;
  border: 1px solid #333;
  background: #fff;

  &:checked {
    background: ${color.accent};
  }
`;

// hand-drawn mark over the edited rows
const Marker = styled.svg`
  position: absolute;
  top: 249px;
  left: -55px;
  width: 460px;
  height: 80px;
  pointer-events: none;

  ellipse {
    fill: none;
    stroke: #ff0000;
    stroke-width: 7px;
  }
`;

// status bar
const StatusBar = styled.footer`
  display: flex;
  flex: none;
  gap: 2px;
  height: 20px;
  margin-top: 3px;
  font-family: ${font.song};
`;

const StatusCell = styled.span`
  flex: ${({ $grow }) => ($grow ? '1' : 'none')};
  width: ${({ $width }) => ($width ? `${$width}px` : 'auto')};
  padding: 1px;
  border: 1px solid #d5d5d5;
  background: linear-gradient(#fdfdfd, #f0f0f0);
  white-space: pre;
  overflow: hidden;
`;

// task bar
const Task = styled.footer`
  display: flex;
  flex: none;
  height: 40px;
  background: #000c10;
  color: #fff;
`;

const Start = styled.button`
  display: flex;
  align-items: center;
  justify-content: center;
  flex: none;
  width: 48px;
  background: #000;
`;

const Cortana = styled.label`
  display: flex;
  align-items: center;
  flex: none;
  gap: 5px;
  width: 344px;
  padding: 0 15px 0 9px;
  background: #333;
`;

const CortanaInput = styled.input`
  flex: 1;
  min-width: 0;
  outline: none;
  font-size: 14px;

  &::placeholder {
    color: #a0a0a0;
  }
`;

const TaskApps = styled.div`
  display: flex;
  flex: 1;
`;

const TaskButton = styled.button`
  display: flex;
  align-items: center;
  justify-content: center;
  width: 50px;
  border-top: 2px solid transparent;
  border-bottom: 2px solid ${({ $running }) => ($running ? '#7ab8f5' : 'transparent')};
  background: ${({ $focus }) => ($focus ? '#333e42' : 'none')};
  color: ${({ $tone }) => $tone || '#fff'};
`;

const Tray = styled.div`
  display: flex;
  align-items: center;
  flex: none;
  gap: 20px;
  white-space: nowrap;
`;

const TrayStack = styled.span`
  display: flex;
  flex-direction: column;
  align-items: center;
`;

const TrayIcons = styled.span`
  display: flex;
  align-items: center;
  gap: 9px;
`;

const TrayLetter = styled.span`
  font-size: 18px;
  font-weight: 600;
`;

const Clock = styled.div`
  display: flex;
  flex-direction: column;
  align-items: center;
  justify-content: center;
  flex: none;
  width: 94px;
  line-height: 18px;
`;

const Notice = styled.button`
  display: flex;
  align-items: center;
  justify-content: center;
  flex: none;
  width: 40px;
  background: #000;
`;

const ShowDesktop = styled.button`
  flex: none;
  width: 5px;
  border-left: 1px solid #555;
  background: #000;
`;

export default App;
